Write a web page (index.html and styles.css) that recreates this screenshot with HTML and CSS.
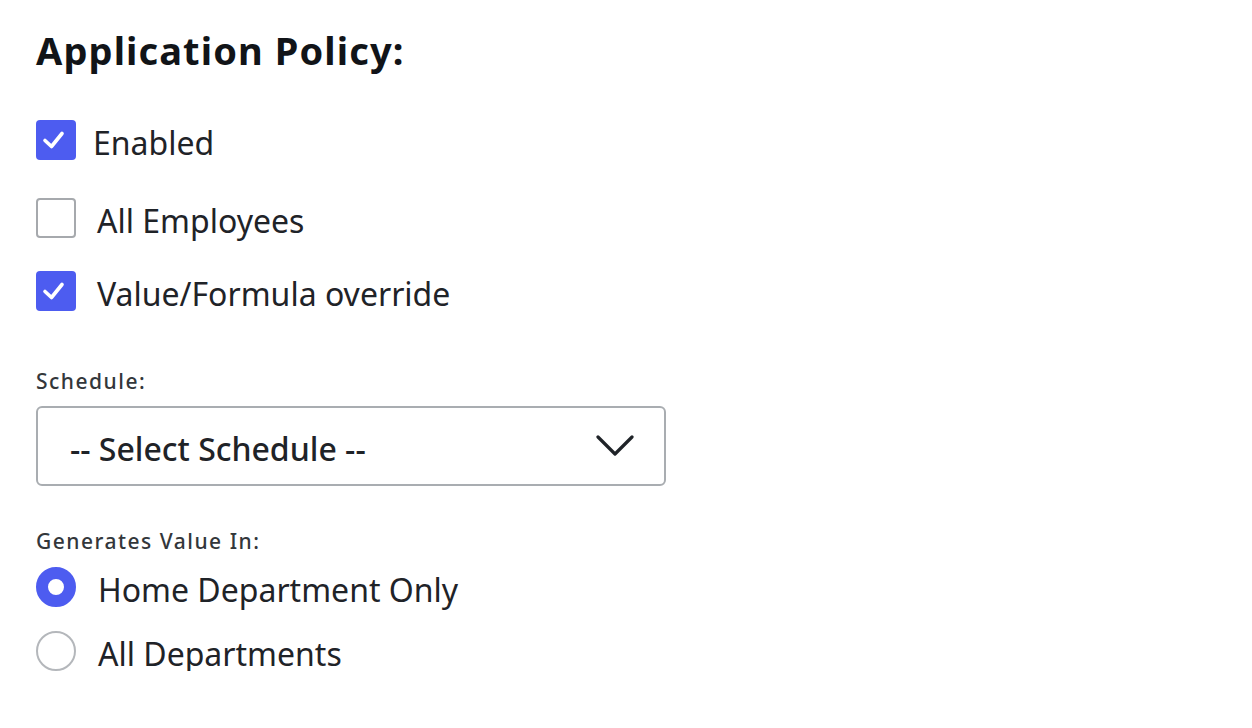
FILE: index.html
```html
<!DOCTYPE html>
<html>
<head>
<meta charset="utf-8">
<link rel="stylesheet" href="styles.css">
</head>
<body>
<div class="panel">
  <h1 class="title">Application Policy:</h1>
  <div class="checks">
    <label class="check check-first">
      <span class="box box-on">
        <svg viewBox="0 0 40 40" width="40" height="40"><path d="M9 20.5 L15.5 26.5 L26 13.5" fill="none" stroke="#fff" stroke-width="3.6" stroke-linecap="round" stroke-linejoin="round"/></svg>
      </span>
      <span class="check-text text-tight">Enabled</span>
    </label>
    <label class="check check-second">
      <span class="box box-off"></span>
      <span class="check-text">All Employees</span>
    </label>
    <label class="check check-third">
      <span class="box box-on">
        <svg viewBox="0 0 40 40" width="40" height="40"><path d="M9 20.5 L15.5 26.5 L26 13.5" fill="none" stroke="#fff" stroke-width="3.6" stroke-linecap="round" stroke-linejoin="round"/></svg>
      </span>
      <span class="check-text">Value/Formula override</span>
    </label>
  </div>

  <div class="field field-schedule">
    <div class="field-label">Schedule:</div>
    <div class="select">
      <span class="select-text">-- Select Schedule --</span>
      <svg class="chevron" viewBox="0 0 38 24" width="38" height="24"><path d="M2 3 L19 20 L36 3" fill="none" stroke="#1f2328" stroke-width="3.2" stroke-linecap="round" stroke-linejoin="round"/></svg>
    </div>
  </div>

  <div class="field field-gen">
    <div class="field-label">Generates Value In:</div>
    <div class="radios">
      <label class="radio radio-first">
        <span class="dot dot-on"></span>
        <span class="radio-text">Home Department Only</span>
      </label>
      <label class="radio radio-second">
        <span class="dot dot-off"></span>
        <span class="radio-text">All Departments</span>
      </label>
    </div>
  </div>
</div>
</body>
</html>
```

FILE: styles.css
```css
html, body {
  margin: 0;
  padding: 0;
  background: #ffffff;
}

body {
  font-family: "Noto Sans", "Open Sans", sans-serif;
  color: #1f2328;
}

.panel {
  padding: 25px 0 0 36px;
  display: flex;
  flex-direction: column;
}

.title {
  margin: 0;
  font-size: 38px;
  font-weight: 700;
  line-height: 50px;
  color: #111418;
  letter-spacing: 1.1px;
}

.checks {
  display: flex;
  flex-direction: column;
  margin-top: 45px;
}

.check {
  display: flex;
  align-items: center;
  height: 40px;
}

.check-second { margin-top: 38px; }
.check-third { margin-top: 33px; }

.box {
  width: 40px;
  height: 40px;
  box-sizing: border-box;
  border-radius: 4px;
  flex: 0 0 auto;
  display: flex;
}

.box-on {
  background: #4d5cf0;
}

.box-off {
  border: 2px solid #a6a9ad;
}

.check-text {
  margin-left: 21px;
  padding-top: 5px;
  font-size: 32px;
  line-height: 40px;
  color: #1f2328;
}

.check-text.text-tight {
  margin-left: 17px;
}

.field {
  display: flex;
  flex-direction: column;
}

.field-schedule { margin-top: 57px; }

.field-label {
  font-size: 21px;
  font-weight: 500;
  letter-spacing: 1.5px;
  line-height: 26px;
  color: #33373b;
}

.select {
  margin-top: 12px;
  width: 630px;
  height: 80px;
  box-sizing: border-box;
  border: 2px solid #a9adb1;
  border-radius: 6px;
  display: flex;
  align-items: center;
  justify-content: space-between;
  padding: 0 30px 0 32px;
}

.select-text {
  padding-top: 4px;
  font-size: 32px;
  font-weight: 500;
  color: #1f2328;
}

.chevron {
  flex: 0 0 auto;
}

.field-gen { margin-top: 42px; }

.radios {
  display: flex;
  flex-direction: column;
}

.radio {
  display: flex;
  align-items: center;
  height: 40px;
}

.radio-first { margin-top: 13px; }
.radio-second { margin-top: 24px; }

.dot {
  width: 40px;
  height: 40px;
  box-sizing: border-box;
  border-radius: 50%;
  flex: 0 0 auto;
}

.dot-on {
  border: 12.5px solid #4d5cf0;
  background: #ffffff;
}

.dot-off {
  border: 2px solid #b4b7bb;
}

.radio-text {
  margin-left: 22px;
  padding-top: 6px;
  font-size: 32px;
  line-height: 40px;
  color: #1f2328;
}
```
